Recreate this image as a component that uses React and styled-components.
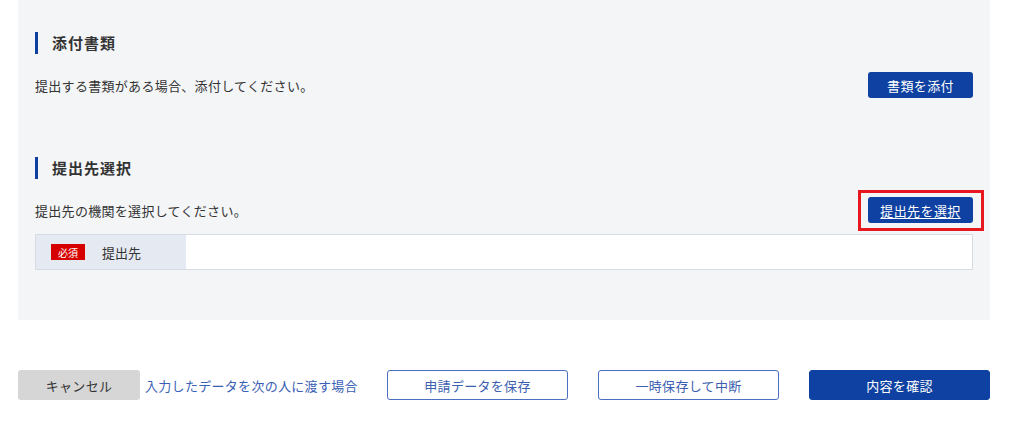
import React from 'react';
import styled, { createGlobalStyle } from 'styled-components';

const GlobalStyle = createGlobalStyle`
  html, body {
    margin: 0;
    padding: 0;
    background: #fff;
    font-family: "Noto Sans CJK JP", "Noto Sans", sans-serif;
    color: #333;
  }
`;

const Page = styled.div`
  width: 972px;
  margin-left: 18px;
`;

const Panel = styled.div`
  background: #f4f5f7;
  padding: 32px 17px 50px;
`;

const Section = styled.section`
  & + & {
    margin-top: 59px;
  }
`;

const Heading = styled.h2`
  margin: 0;
  height: 22px;
  line-height: 22px;
  border-left: 3px solid #0f3f9e;
  padding-left: 14px;
  font-size: 15px;
  font-weight: 700;
  color: #333;
  letter-spacing: 1px;
`;

const Row = styled.div`
  display: flex;
  align-items: center;
  justify-content: space-between;
  height: 26px;
  margin-top: 18px;
`;

const Desc = styled.p`
  margin: 0;
  font-size: 13px;
  letter-spacing: 0.3px;
  color: #333;
`;

const ActionWrap = styled.div`
  position: relative;
`;

const SmallButton = styled.button`
  display: block;
  width: 105px;
  height: 26px;
  border: none;
  border-radius: 3px;
  background: #0e41a1;
  color: #fff;
  font-family: inherit;
  font-size: 13px;
  letter-spacing: 0.4px;
  text-decoration: ${p => (p.$underline ? 'underline' : 'none')};
  text-underline-offset: 2px;
  padding: 0;
  cursor: pointer;
`;

const Highlight = styled.div`
  position: absolute;
  left: -10px;
  right: -11px;
  top: -7px;
  bottom: -8px;
  border: 3px solid #e8161e;
  pointer-events: none;
`;

const Table = styled.div`
  display: flex;
  height: 36px;
  margin-top: 11px;
  border: 1px solid #d8dce4;
  box-sizing: border-box;
  background: #fff;
`;

const LabelCell = styled.div`
  width: 150px;
  display: flex;
  align-items: center;
  background: #e4e9f2;
  padding-left: 15px;
  box-sizing: border-box;
`;

const Badge = styled.span`
  display: inline-flex;
  align-items: center;
  justify-content: center;
  width: 34px;
  height: 16px;
  background: #d60000;
  color: #fff;
  font-size: 10px;
  margin-right: 17px;
`;

const Label = styled.span`
  font-size: 13px;
  color: #333;
`;

const Footer = styled.div`
  display: flex;
  align-items: center;
  margin-top: 50px;
`;

const CancelButton = styled.button`
  width: 122px;
  height: 30px;
  border: none;
  border-radius: 3px;
  background: #d6d6d6;
  color: #333;
  font-family: inherit;
  font-size: 13px;
  letter-spacing: 0.3px;
  padding: 0;
`;

const HandLink = styled.a`
  margin-left: 5px;
  font-size: 13px;
  letter-spacing: 0.3px;
  color: #3a60b5;
  text-decoration: none;
`;

const FooterButtons = styled.div`
  display: flex;
  gap: 30px;
  margin-left: auto;
`;

const FooterButton = styled.button`
  width: 181px;
  height: 30px;
  border-radius: 3px;
  border: 1px solid ${p => (p.$primary ? '#0e41a1' : '#4a6ec0')};
  background: ${p => (p.$primary ? '#0e41a1' : '#fff')};
  color: ${p => (p.$primary ? '#fff' : '#3d5fb0')};
  font-family: inherit;
  font-size: 13px;
  letter-spacing: 0.3px;
  padding: 0;
`;

export default function App() {
  return (
    <Page>
      <GlobalStyle />
      <Panel>
        <Section>
          <Heading>添付書類</Heading>
          <Row>
            <Desc>提出する書類がある場合、添付してください。</Desc>
            <SmallButton>書類を添付</SmallButton>
          </Row>
        </Section>
        <Section>
          <Heading>提出先選択</Heading>
          <Row>
            <Desc>提出先の機関を選択してください。</Desc>
            <ActionWrap>
              <SmallButton $underline>提出先を選択</SmallButton>
              <Highlight />
            </ActionWrap>
          </Row>
          <Table>
            <LabelCell>
              <Badge>必須</Badge>
              <Label>提出先</Label>
            </LabelCell>
          </Table>
        </Section>
      </Panel>
      <Footer>
        <CancelButton>キャンセル</CancelButton>
        <HandLink href="#">入力したデータを次の人に渡す場合</HandLink>
        <FooterButtons>
          <FooterButton>申請データを保存</FooterButton>
          <FooterButton>一時保存して中断</FooterButton>
          <FooterButton $primary>内容を確認</FooterButton>
        </FooterButtons>
      </Footer>
    </Page>
  );
}
